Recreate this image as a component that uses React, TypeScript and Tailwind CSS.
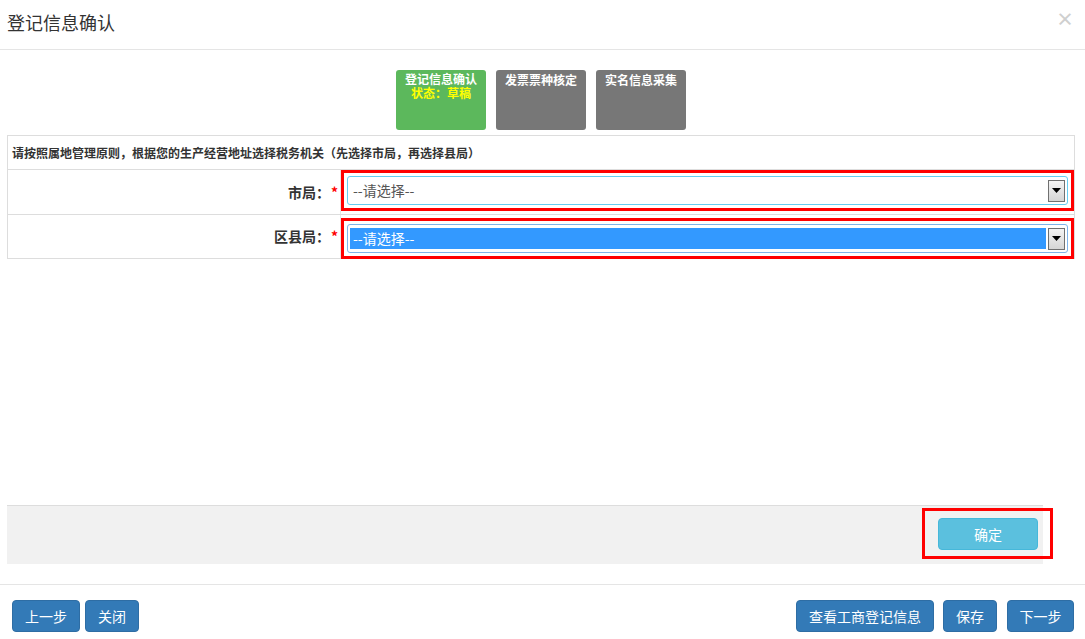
import React from "react";

const font = { fontFamily: '"Microsoft YaHei", "Noto Sans CJK SC", "Noto Sans", sans-serif' };

function Arrow() {
  return (
    <div className="w-[17px] h-[22px] border border-[#707070] bg-gradient-to-b from-[#f4f4f4] to-[#d6d6d6] flex items-center justify-center shrink-0">
      <svg width="9" height="5" viewBox="0 0 9 5">
        <path d="M0 0 H9 L4.5 5 Z" fill="#000" />
      </svg>
    </div>
  );
}

function SelectBox({ highlighted }: { highlighted?: boolean }) {
  return (
    <div className="border-[3px] border-[#ff0000] p-[3px] w-full">
      <div
        className={
          "h-[29px] rounded-[3px] border flex items-center pr-[2px] pl-[2px] bg-white " +
          (highlighted ? "border-[#7eb4ea]" : "border-[#66ccf0]")
        }
      >
        <div
          className={
            "flex-1 h-[21px] flex items-center text-[14px] pl-[3px] " +
            (highlighted ? "bg-[#3399ff] text-white" : "text-[#555]")
          }
        >
          --请选择--
        </div>
        <div className="ml-[2px]">
          <Arrow />
        </div>
      </div>
    </div>
  );
}

function Btn({ children, w }: { children: React.ReactNode; w: string }) {
  return (
    <button
      className={
        "h-[32px] rounded-[4px] bg-[#337ab7] border border-[#2e6da4] text-white text-[14px] flex items-center justify-center " +
        w
      }
    >
      {children}
    </button>
  );
}

export default function App() {
  return (
    <div className="w-[1085px] h-[639px] bg-white text-[#333] overflow-hidden flex flex-col" style={font}>
      {/* header */}
      <div className="h-[50px] border-b border-[#e5e5e5] flex items-start justify-between pl-[7px] pr-[11px] pt-[9px] shrink-0">
        <div className="text-[18px] leading-[26px] text-[#333]">登记信息确认</div>
        <div className="text-[18px] leading-[18px] font-bold text-[#cfcfcf]">×</div>
      </div>

      {/* steps */}
      <div className="flex justify-center gap-[10px] mt-[20px] pr-[3px]">
        <div className="w-[90px] h-[60px] rounded-[3px] bg-[#5cb85c] flex flex-col items-center pt-[2px] text-[12px] font-bold leading-[14px]">
          <span className="text-white">登记信息确认</span>
          <span className="text-[#ffff00]">状态：草稿</span>
        </div>
        <div className="w-[90px] h-[60px] rounded-[3px] bg-[#777] flex flex-col items-center pt-[3px] text-[12px] font-bold leading-[14px] text-white">
          发票票种核定
        </div>
        <div className="w-[90px] h-[60px] rounded-[3px] bg-[#777] flex flex-col items-center pt-[3px] text-[12px] font-bold leading-[14px] text-white">
          实名信息采集
        </div>
      </div>

      {/* table */}
      <div className="mx-[7px] mt-[5px] w-[1068px] border border-[#dddddd]">
        <div className="h-[34px] flex items-center px-[4px] text-[12px] font-bold text-[#333] border-b border-[#dddddd]">
          请按照属地管理原则，根据您的生产经营地址选择税务机关（先选择市局，再选择县局）
        </div>
        <div className="h-[45px] flex border-b border-[#dddddd]">
          <div className="w-[333px] border-r border-[#e8e8e8] flex items-center justify-end pr-[2px] text-[14px] font-bold">
            市局：<span className="text-[#ff0000] ml-[1px]">*</span>
          </div>
          <div className="flex-1">
            <SelectBox />
          </div>
        </div>
        <div className="h-[43px] flex items-center">
          <div className="w-[333px] h-full border-r border-[#e8e8e8] flex items-center justify-end pr-[2px] text-[14px] font-bold">
            区县局：<span className="text-[#ff0000] ml-[1px]">*</span>
          </div>
          <div className="flex-1 pt-[3px] h-full">
            <SelectBox highlighted />
          </div>
        </div>
      </div>

      {/* action bar */}
      <div className="mx-[7px] mt-[246px] w-[1036px] h-[59px] bg-[#f1f1f1] border-t border-[#dddddd] flex justify-end items-start">
        <div className="border-[3px] border-[#ff0000] mt-[2px] -mr-[10px] pl-[13px] pr-[12px] pt-[7px] pb-[6px]">
          <button className="w-[100px] h-[32px] rounded-[4px] bg-[#5bc0de] border border-[#46b8da] text-white text-[14px] flex items-center justify-center">
            确定
          </button>
        </div>
      </div>

      {/* footer */}
      <div className="mt-[20px] border-t border-[#e5e5e5] flex justify-between pt-[15px] pl-[12px] pr-[11px]">
        <div className="flex gap-[5px]">
          <Btn w="w-[68px]">上一步</Btn>
          <Btn w="w-[54px]">关闭</Btn>
        </div>
        <div className="flex gap-[8px]">
          <div className="mr-[1px]">
            <Btn w="w-[138px]">查看工商登记信息</Btn>
          </div>
          <Btn w="w-[54px]">保存</Btn>
          <div className="ml-[2px]">
            <Btn w="w-[67px]">下一步</Btn>
          </div>
        </div>
      </div>
    </div>
  );
}
